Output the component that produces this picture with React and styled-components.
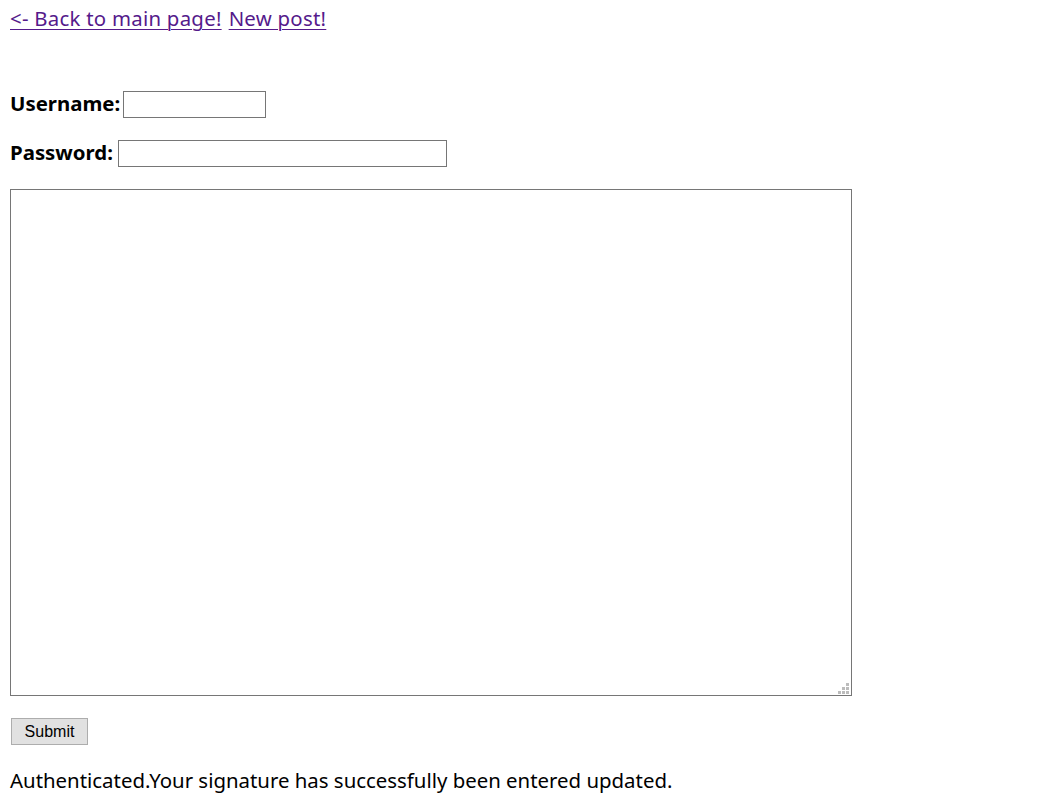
import React from "react";
import styled, { createGlobalStyle } from "styled-components";

const Global = createGlobalStyle`
  html, body {
    margin: 0;
    padding: 0;
    background: #fff;
  }
  body {
    font-family: "Noto Sans", "Open Sans", sans-serif;
    color: #000;
  }
`;

const Page = styled.div`
  padding: 5px 10px 10px 10px;
`;

const Nav = styled.nav`
  display: flex;
  gap: 7px;
  font-size: 20.4px;
  line-height: 26px;
  letter-spacing: 0.25px;
`;

const NavLink = styled.a`
  color: #551a8b;
  text-decoration: underline;
  text-underline-offset: 3px;
  text-decoration-thickness: 1px;
`;

const Form = styled.form`
  display: flex;
  flex-direction: column;
  align-items: flex-start;
  gap: 22px;
  margin-top: 60px;
`;

const Row = styled.div`
  display: flex;
  align-items: center;
  gap: ${(p) => p.$gap || 5}px;
  height: 27px;
`;

const Label = styled.label`
  font-weight: bold;
  font-size: 20.4px;
  padding-bottom: 3px;
`;

const Input = styled.input`
  box-sizing: border-box;
  width: ${(p) => p.$w}px;
  height: 27px;
  border: 1px solid #767676;
  padding: 2px 4px;
  font-size: 14px;
  outline: none;
`;

const AreaWrap = styled.div`
  position: relative;
  width: 842px;
  height: 507px;
`;

const Area = styled.textarea`
  box-sizing: border-box;
  display: block;
  width: 100%;
  height: 100%;
  border: 1px solid #767676;
  resize: none;
  outline: none;
  padding: 2px;
`;

const Grip = styled.svg`
  position: absolute;
  right: 3px;
  bottom: 2px;
`;

const Button = styled.button`
  box-sizing: border-box;
  width: 77px;
  height: 27px;
  margin-left: 1px;
  background: #e1e1e1;
  border: 1px solid #adadad;
  font-family: "Liberation Sans", Arial, sans-serif;
  font-size: 16px;
  color: #000;
  padding: 0;
`;

const Message = styled.p`
  margin: 0;
  font-size: 20.4px;
  line-height: 26px;
`;

const dots = [
  [8, 0],
  [4, 4],
  [8, 4],
  [0, 8],
  [4, 8],
  [8, 8],
];

export default function App() {
  return (
    <Page>
      <Global />
      <Nav>
        <NavLink href="#">&lt;- Back to main page!</NavLink>
        <NavLink href="#">New post!</NavLink>
      </Nav>
      <Form onSubmit={(e) => e.preventDefault()}>
        <Row $gap={3}>
          <Label>Username:</Label>
          <Input $w={143} type="text" />
        </Row>
        <Row>
          <Label>Password:</Label>
          <Input $w={329} type="password" />
        </Row>
        <AreaWrap>
          <Area />
          <Grip width="11" height="11" viewBox="0 0 11 11">
            {dots.map(([x, y], i) => (
              <rect key={i} x={x} y={y} width="3" height="3" fill="#bcbcbc" />
            ))}
          </Grip>
        </AreaWrap>
        <Button type="submit">Submit</Button>
        <Message>
          Authenticated.Your signature has successfully been entered updated.
        </Message>
      </Form>
    </Page>
  );
}
